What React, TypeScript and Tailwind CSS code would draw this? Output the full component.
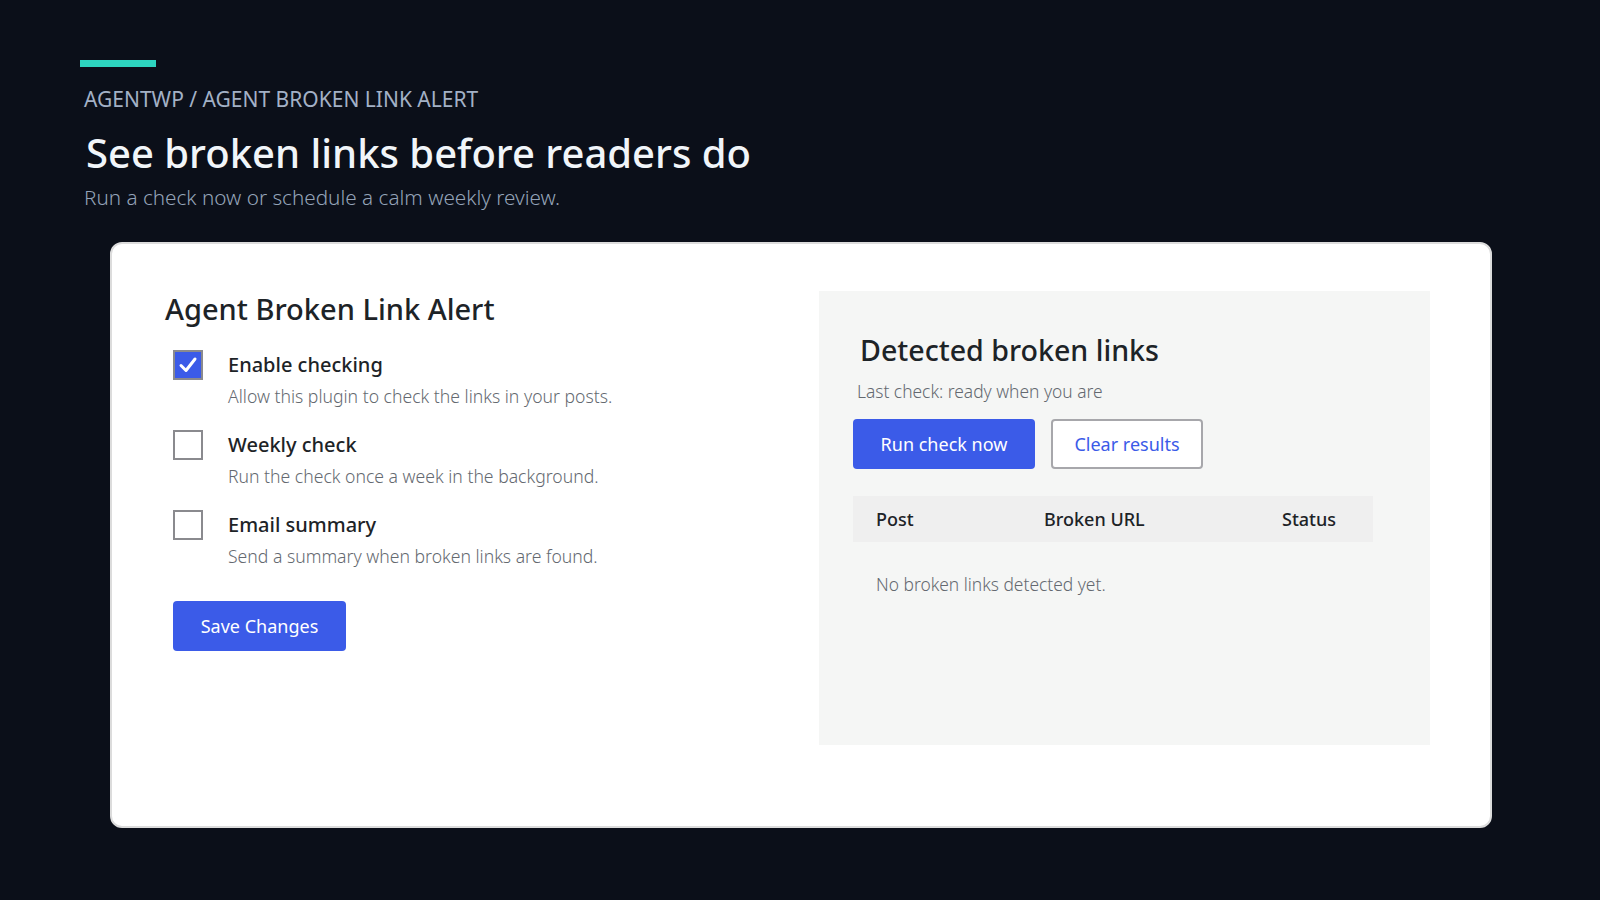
import React, { useState } from 'react';

const font = { fontFamily: '"Noto Sans", "Open Sans", sans-serif' };

type Option = { key: string; label: string; help: string };

const options: Option[] = [
    { key: 'enabled', label: 'Enable checking', help: 'Allow this plugin to check the links in your posts.' },
    { key: 'weekly', label: 'Weekly check', help: 'Run the check once a week in the background.' },
    { key: 'email', label: 'Email summary', help: 'Send a summary when broken links are found.' },
];

function Checkbox({ checked, onChange }: { checked: boolean; onChange: () => void }) {
    return (
        <button
            type="button"
            onClick={onChange}
            className={`w-[30px] h-[30px] shrink-0 border-2 border-[#8a8a8e] flex items-center justify-center ${checked ? 'bg-[#3b5be8]' : 'bg-white'}`}
        >
            {checked && (
                <svg width="20" height="18" viewBox="0 0 20 18" fill="none">
                    <path d="M3 9.5 L8 14.5 L17 3" stroke="white" strokeWidth="3" strokeLinecap="round" strokeLinejoin="round" />
                </svg>
            )}
        </button>
    );
}

export default function App() {
    const [settings, setSettings] = useState<Record<string, boolean>>({
        enabled: true,
        weekly: false,
        email: false,
    });

    return (
        <div className="min-h-screen w-full bg-[#0b0f19] pl-20 pt-[60px] pb-10" style={font}>
            <div className="w-[76px] h-[7px] bg-[#2dd4bf]" />
            <div className="mt-[18px] pl-[4px] text-[21px] leading-[28px] text-[#a3b1c6] uppercase">
                AgentWP / Agent Broken Link Alert
            </div>
            <h1 className="mt-[14px] pl-[6px] text-[40px] leading-[52px] font-medium text-[#f1f5f9]">
                See broken links before readers do
            </h1>
            <p className="mt-[4px] pl-[4px] text-[20.7px] leading-[28px] text-[#94a3b8] font-light">
                Run a check now or schedule a calm weekly review.
            </p>

            <div className="mt-[31px] ml-[30px] w-[1382px] h-[586px] bg-white rounded-[12px] border-2 border-[#dcdcdc] flex pl-[53px] pt-[47px] pr-[59px]">
                <div className="w-[654px]">
                    <h2 className="text-[29px] leading-[36px] font-medium text-[#1d2327]">Agent Broken Link Alert</h2>
                    <div className="mt-[23px] flex flex-col gap-[21px] pl-[8px]">
                        {options.map((o) => (
                            <div key={o.key} className="flex gap-[25px]">
                                <Checkbox
                                    checked={settings[o.key]}
                                    onChange={() => setSettings({ ...settings, [o.key]: !settings[o.key] })}
                                />
                                <div className="pt-[1px]">
                                    <div className="text-[20px] leading-[28px] font-medium text-[#1d2327]">{o.label}</div>
                                    <div className="mt-[4px] text-[17.6px] leading-[26px] text-[#646970] font-light">{o.help}</div>
                                </div>
                            </div>
                        ))}
                    </div>
                    <button className="mt-[32px] ml-[8px] w-[173px] h-[50px] rounded-[4px] bg-[#3b5be8] text-white text-[18px]">
                        Save Changes
                    </button>
                </div>

                <div className="w-[611px] h-[454px] bg-[#f5f6f5] px-[34px] pt-[39px]">
                    <h3 className="pl-[7px] text-[28.6px] leading-[40px] font-medium text-[#1d2327]">Detected broken links</h3>
                    <p className="mt-[8px] pl-[4px] text-[17.4px] leading-[26px] text-[#646970] font-light">Last check: ready when you are</p>
                    <div className="mt-[15px] flex gap-[16px]">
                        <button className="w-[182px] h-[50px] rounded-[4px] bg-[#3b5be8] text-white text-[18px]">Run check now</button>
                        <button className="w-[152px] h-[50px] rounded-[4px] bg-white border-2 border-[#a7a7ab] text-[#3b5be8] text-[18px]">
                            Clear results
                        </button>
                    </div>
                    <div className="mt-[27px] w-[520px]">
                        <div className="grid grid-cols-[191px_215px_114px] h-[46px] items-center bg-[#efefef] pl-[23px] text-[18px] font-medium text-[#1d2327]">
                            <div>Post</div>
                            <div className="-ml-[23px]">Broken URL</div>
                            <div>Status</div>
                        </div>
                        <div className="pl-[23px] pt-[29px] text-[17.4px] leading-[26px] text-[#646970] font-light">
                            No broken links detected yet.
                        </div>
                    </div>
                </div>
            </div>
        </div>
    );
}
